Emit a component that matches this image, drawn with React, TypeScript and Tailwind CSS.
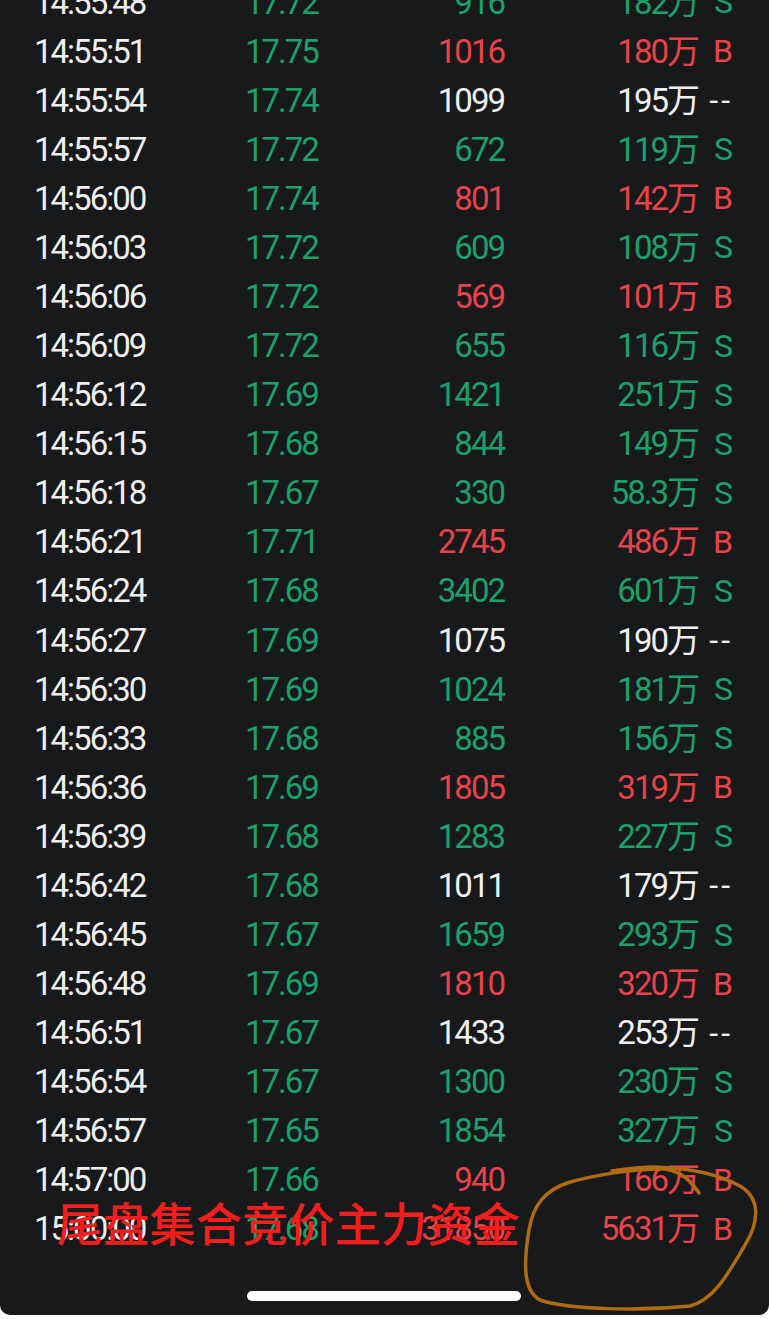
import React from "react";

type Row = [string, string, string, "g" | "r" | "w", string, string];

const rows: Row[] = [
  ["14:55:48", "17.72", "916", "g", "182万", "S"],
  ["14:55:51", "17.75", "1016", "r", "180万", "B"],
  ["14:55:54", "17.74", "1099", "w", "195万", "--"],
  ["14:55:57", "17.72", "672", "g", "119万", "S"],
  ["14:56:00", "17.74", "801", "r", "142万", "B"],
  ["14:56:03", "17.72", "609", "g", "108万", "S"],
  ["14:56:06", "17.72", "569", "r", "101万", "B"],
  ["14:56:09", "17.72", "655", "g", "116万", "S"],
  ["14:56:12", "17.69", "1421", "g", "251万", "S"],
  ["14:56:15", "17.68", "844", "g", "149万", "S"],
  ["14:56:18", "17.67", "330", "g", "58.3万", "S"],
  ["14:56:21", "17.71", "2745", "r", "486万", "B"],
  ["14:56:24", "17.68", "3402", "g", "601万", "S"],
  ["14:56:27", "17.69", "1075", "w", "190万", "--"],
  ["14:56:30", "17.69", "1024", "g", "181万", "S"],
  ["14:56:33", "17.68", "885", "g", "156万", "S"],
  ["14:56:36", "17.69", "1805", "r", "319万", "B"],
  ["14:56:39", "17.68", "1283", "g", "227万", "S"],
  ["14:56:42", "17.68", "1011", "w", "179万", "--"],
  ["14:56:45", "17.67", "1659", "g", "293万", "S"],
  ["14:56:48", "17.69", "1810", "r", "320万", "B"],
  ["14:56:51", "17.67", "1433", "w", "253万", "--"],
  ["14:56:54", "17.67", "1300", "g", "230万", "S"],
  ["14:56:57", "17.65", "1854", "g", "327万", "S"],
  ["14:57:00", "17.66", "940", "r", "166万", "B"],
  ["15:00:00", "17.68", "31850", "r", "5631万", "B"],
];

const colorClass = {
  g: "text-[#1ca06c]",
  r: "text-[#e8434a]",
  w: "text-[#efefef]",
};

export default function App() {
  return (
    <div className="relative w-[769px] h-[1319px] bg-white overflow-hidden">
      <div className="relative h-[1315px] bg-[#18191b] rounded-b-[10px] overflow-hidden font-[Roboto,'Noto_Sans_CJK_SC',sans-serif] text-[33px] tracking-[-2px] leading-none">
        <div className="mt-[-22.5px] flex flex-col">
          {rows.map((r, i) => (
            <div key={i} className="flex items-center h-[49.08px]">
              <div className="w-[245px] pl-[34px] text-[#efefef]">{r[0]}</div>
              <div className="w-[110px] text-[#1ca06c]">{r[1]}</div>
              <div className={`w-[149px] text-right ${colorClass[r[3]]}`}>{r[2]}</div>
              <div className={`w-[194px] text-right ${colorClass[r[3]]}`}>{r[4]}</div>
              <div
                className={`w-[35px] text-right text-[32px] ${
                  r[5] === "--" ? "tracking-[3px] mr-[-3px]" : "tracking-normal"
                } ${colorClass[r[3]]}`}
              >
                {r[5]}
              </div>
            </div>
          ))}
        </div>
        <div className="mt-[37px] ml-[247px] w-[274px] h-[10px] rounded-full bg-white" />
      </div>

      <div className="absolute left-[57px] top-[1198px] font-['Noto_Sans_CJK_SC',sans-serif] text-[46px] leading-none font-medium text-[#f21e1e] whitespace-nowrap tracking-[0.3px]">
        尾盘集合竞价主力资金
      </div>

      <svg
        className="absolute left-0 top-0 pointer-events-none"
        width="769"
        height="1319"
        viewBox="0 0 769 1319"
        fill="none"
      >
        <path
          d="M 699 1193 C 690 1180, 682 1172, 665 1169 C 640 1168, 600 1174, 570 1182 C 545 1190, 533 1205, 529 1230 C 524 1260, 522 1290, 540 1300 C 570 1310, 640 1311, 690 1306 C 715 1300, 730 1270, 745 1245 C 760 1220, 760 1198, 740 1186 C 720 1175, 690 1168, 655 1167 C 640 1167, 625 1169, 612 1171"
          stroke="#b06a12"
          strokeWidth="3.5"
          strokeLinecap="round"
          strokeLinejoin="round"
        />
      </svg>
    </div>
  );
}
